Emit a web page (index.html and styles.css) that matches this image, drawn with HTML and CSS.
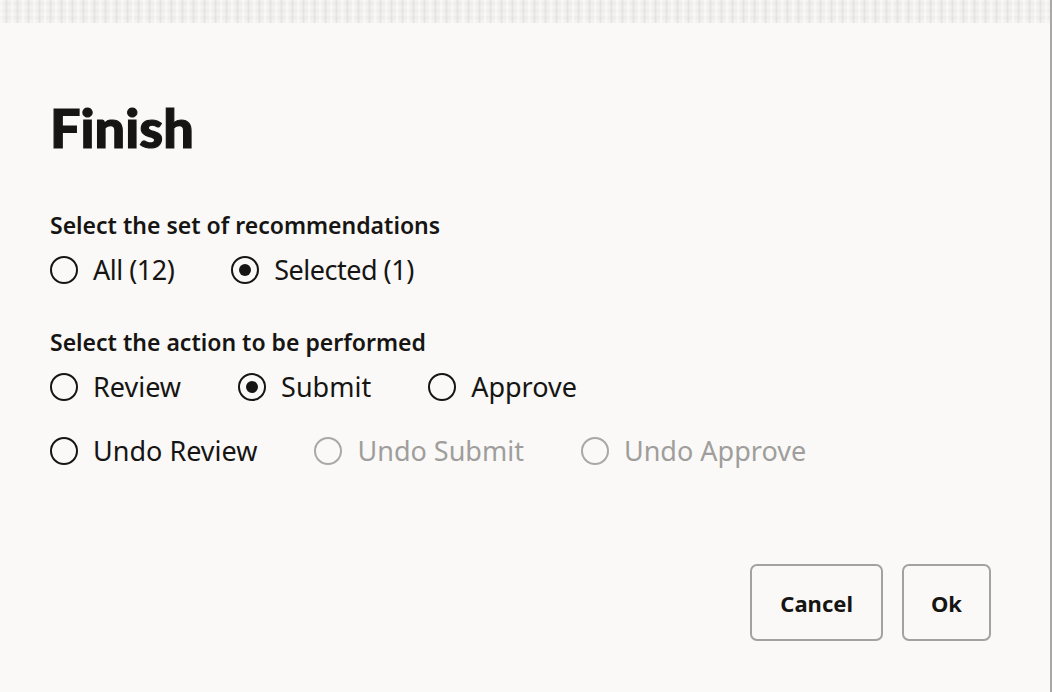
FILE: index.html
```html
<!DOCTYPE html>
<html lang="en">
<head>
<meta charset="utf-8">
<title>Finish</title>
<link rel="stylesheet" href="styles.css">
</head>
<body>
<div class="topband"></div>
<div class="dialog">
  <h1 class="title">Finish</h1>
  <div class="group group-first">
    <div class="group-label">Select the set of recommendations</div>
    <div class="row">
      <label class="radio"><span class="dot"></span><span class="text tight">All (12)</span></label>
      <label class="radio checked"><span class="dot"></span><span class="text tight">Selected (1)</span></label>
    </div>
  </div>
  <div class="group group-second">
    <div class="group-label">Select the action to be performed</div>
    <div class="row">
      <label class="radio"><span class="dot"></span><span class="text">Review</span></label>
      <label class="radio checked"><span class="dot"></span><span class="text">Submit</span></label>
      <label class="radio"><span class="dot"></span><span class="text">Approve</span></label>
    </div>
    <div class="row row-second">
      <label class="radio"><span class="dot"></span><span class="text">Undo Review</span></label>
      <label class="radio disabled"><span class="dot"></span><span class="text">Undo Submit</span></label>
      <label class="radio disabled"><span class="dot"></span><span class="text">Undo Approve</span></label>
    </div>
  </div>
  <div class="footer">
    <button class="btn btn-cancel">Cancel</button>
    <button class="btn btn-ok">Ok</button>
  </div>
</div>
</body>
</html>
```

FILE: styles.css
```css
html, body {
  margin: 0;
  padding: 0;
  height: 100%;
}
body {
  background: #faf9f7;
  font-family: "Noto Sans", "Open Sans", sans-serif;
  color: #161513;
  overflow: hidden;
  border-right: 2px solid #a9a8a6;
  box-sizing: border-box;
}
.topband {
  height: 23px;
  background-color: #eeedeb;
  background-image:
    repeating-linear-gradient(90deg, rgba(255,255,255,0.45) 0 2px, rgba(0,0,0,0) 3px 5px, rgba(215,214,212,0.45) 6px 7px, rgba(0,0,0,0) 8px 11px),
    repeating-linear-gradient(0deg, rgba(255,255,255,0.3) 0 3px, rgba(0,0,0,0) 4px 7px);
}
.dialog {
  padding: 0 59px 0 50px;
  display: flex;
  flex-direction: column;
}
.title {
  font-family: Lato, "Noto Sans", sans-serif;
  font-weight: 900;
  font-size: 54px;
  line-height: 60px;
  margin: 75px 0 0 0;
  -webkit-text-stroke: 1.2px #161513;
}
.group {
  display: flex;
  flex-direction: column;
}
.group-first {
  margin-top: 52px;
}
.group-second {
  margin-top: 38px;
}
.group-label {
  font-size: 23px;
  font-weight: 600;
  line-height: 30px;
}
.row {
  display: flex;
  gap: 57px;
  margin-top: 11px;
}
.row-second {
  margin-top: 26px;
}
.radio {
  display: flex;
  align-items: center;
  gap: 15px;
  font-size: 27px;
  line-height: 38px;
}
.tight {
  letter-spacing: -0.5px;
}
.dot {
  width: 24px;
  height: 24px;
  border: 2px solid #161513;
  border-radius: 50%;
  position: relative;
  flex: none;
}
.checked .dot::after {
  content: "";
  position: absolute;
  left: 6px;
  top: 6px;
  width: 12px;
  height: 12px;
  border-radius: 50%;
  background: #161513;
}
.disabled {
  color: #9f9e9c;
}
.disabled .dot {
  border-color: #a9a8a6;
}
.footer {
  display: flex;
  justify-content: flex-end;
  gap: 19px;
  margin-top: 94px;
}
.btn {
  font-family: "Noto Sans", sans-serif;
  font-weight: 700;
  font-size: 22px;
  color: #161513;
  background: #faf9f7;
  border: 2px solid #a3a2a0;
  border-radius: 7px;
  height: 77px;
}
.btn-cancel {
  padding: 0 28px;
}
.btn-ok {
  padding: 0 27px;
}
```
